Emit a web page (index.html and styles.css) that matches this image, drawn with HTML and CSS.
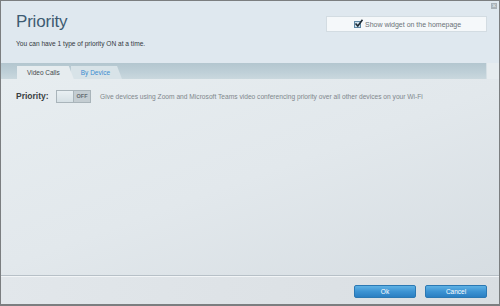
FILE: index.html
```html
<!DOCTYPE html>
<html lang="en">
<head>
    <meta charset="UTF-8">
    <meta name="viewport" content="width=device-width, initial-scale=1.0">
    <title>Priority</title>
    <link rel="stylesheet" href="styles.css">
</head>
<body>
    <div class="window">
        <span class="close-btn" title="Close">&#215;</span>

        <div class="head">
            <div class="head-text">
                <h1>Priority</h1>
                <p>You can have 1 type of priority ON at a time.</p>
            </div>
            <label class="widget-box">
                <span class="check">
                    <svg width="9" height="9" viewBox="0 0 9 9"><path d="M1.5 4.5 L3.8 7 L8.5 0.8" fill="none" stroke="#1d2b36" stroke-width="1.6"/></svg>
                </span>
                Show widget on the homepage
            </label>
        </div>

        <div class="tab-strip">
            <div class="tab-bar">
                <span class="tab tab-active">Video Calls</span>
                <span class="tab">By Device</span>
            </div>
        </div>

        <div class="content">
            <div class="priority-row">
                <span class="priority-label">Priority:</span>
                <span class="switch">
                    <span class="switch-knob"></span>
                    <span class="switch-off">OFF</span>
                </span>
                <span class="priority-desc">Give devices using Zoom and Microsoft Teams video conferencing priority over all other devices on your Wi-Fi</span>
            </div>
        </div>

        <div class="footer">
            <button class="btn">Ok</button>
            <button class="btn">Cancel</button>
        </div>
    </div>
</body>
</html>
```

FILE: styles.css
```css
* {
    margin: 0;
    padding: 0;
    box-sizing: border-box;
}

body {
    font-family: 'Liberation Sans', Arial, sans-serif;
    width: 500px;
    height: 306px;
    background: #ffffff;
}

.window {
    position: relative;
    width: 500px;
    height: 306px;
    border: 1px solid #7b7e80;
    border-bottom-width: 2px;
    display: flex;
    flex-direction: column;
    background: #e3eaef;
}

.close-btn {
    position: absolute;
    top: 2px;
    right: 2px;
    width: 6px;
    height: 6px;
    background: #a9b2b8;
    color: #e8eef2;
    font-size: 7px;
    line-height: 6px;
    text-align: center;
}

.head {
    height: 62px;
    display: flex;
    justify-content: space-between;
    align-items: flex-start;
    padding: 0 12px 0 15px;
    background: #dfe8ef;
}

.head-text h1 {
    font-size: 17px;
    font-weight: normal;
    color: #3d5b72;
    margin-top: 11px;
    letter-spacing: -0.2px;
}

.head-text p {
    font-size: 6.6px;
    color: #33393e;
    margin-top: 8px;
}

.widget-box {
    margin-top: 15px;
    width: 161px;
    height: 16px;
    background: #f5f8fa;
    border: 1px solid #d3dce2;
    display: flex;
    align-items: center;
    padding-left: 27px;
    gap: 4px;
    font-size: 7px;
    color: #6a7278;
}

.check {
    width: 7px;
    height: 7px;
    background: #cfe3ef;
    border: 1px solid #5d86a3;
    position: relative;
}

.check svg {
    position: absolute;
    left: -1px;
    top: -3px;
}

.tab-strip {
    display: flex;
    background: #e6ecef;
    padding-right: 12px;
}

.tab-bar {
    flex: 1;
    height: 16px;
    display: flex;
    align-items: flex-end;
    padding-left: 16px;
    background: linear-gradient(to bottom, #b3c6cf 0%, #bfd0d8 60%, #cad8de 100%);
    border-right: 1px solid #d6e0e5;
}

.tab {
    height: 13px;
    display: flex;
    align-items: center;
    font-size: 6.5px;
    color: #3b8dd0;
    padding: 0 12px 0 10px;
    background: #d8e3e8;
    clip-path: polygon(0 0, calc(100% - 5px) 0, 100% 100%, 0 100%);
    margin-right: -3px;
}

.tab-active {
    background: #e6ecef;
    color: #44494d;
    position: relative;
    z-index: 1;
    padding-right: 14px;
}

.content {
    flex: 1;
    background: linear-gradient(160deg, #e7edf0 0%, #e2e8ec 50%, #d6dde2 100%);
    padding: 10px 15px 0;
}

.priority-row {
    display: flex;
    align-items: center;
    height: 14px;
}

.priority-label {
    font-size: 8.5px;
    font-weight: bold;
    color: #3a3f43;
    width: 40px;
}

.switch {
    display: flex;
    width: 35px;
    height: 13px;
    border: 1px solid #a9b4ba;
    background: #c4cdd2;
}

.switch-knob {
    width: 17px;
    background: linear-gradient(to bottom, #e9f0f3, #d6e0e5);
    border-right: 1px solid #a9b4ba;
}

.switch-off {
    flex: 1;
    font-size: 5.5px;
    font-weight: bold;
    color: #646b70;
    display: flex;
    align-items: center;
    justify-content: center;
}

.priority-desc {
    margin-left: 9px;
    font-size: 6.65px;
    color: #80878c;
}

.footer {
    height: 29px;
    border-top: 1px solid #b7c0c7;
    box-shadow: inset 0 1px 0 #f2f5f7;
    background: linear-gradient(100deg, #e2e7eb 0%, #d9dee2 100%);
    display: flex;
    justify-content: flex-end;
    align-items: center;
    gap: 9px;
    padding-right: 12px;
    padding-top: 2px;
}

.btn {
    width: 62px;
    height: 13px;
    border: 1px solid #2b78b3;
    border-radius: 2px;
    background: linear-gradient(to bottom, #5eb1e4 0%, #3d93d3 50%, #2b7fc2 100%);
    color: #ffffff;
    font-family: 'Liberation Sans', Arial, sans-serif;
    font-size: 6.5px;
}
```
